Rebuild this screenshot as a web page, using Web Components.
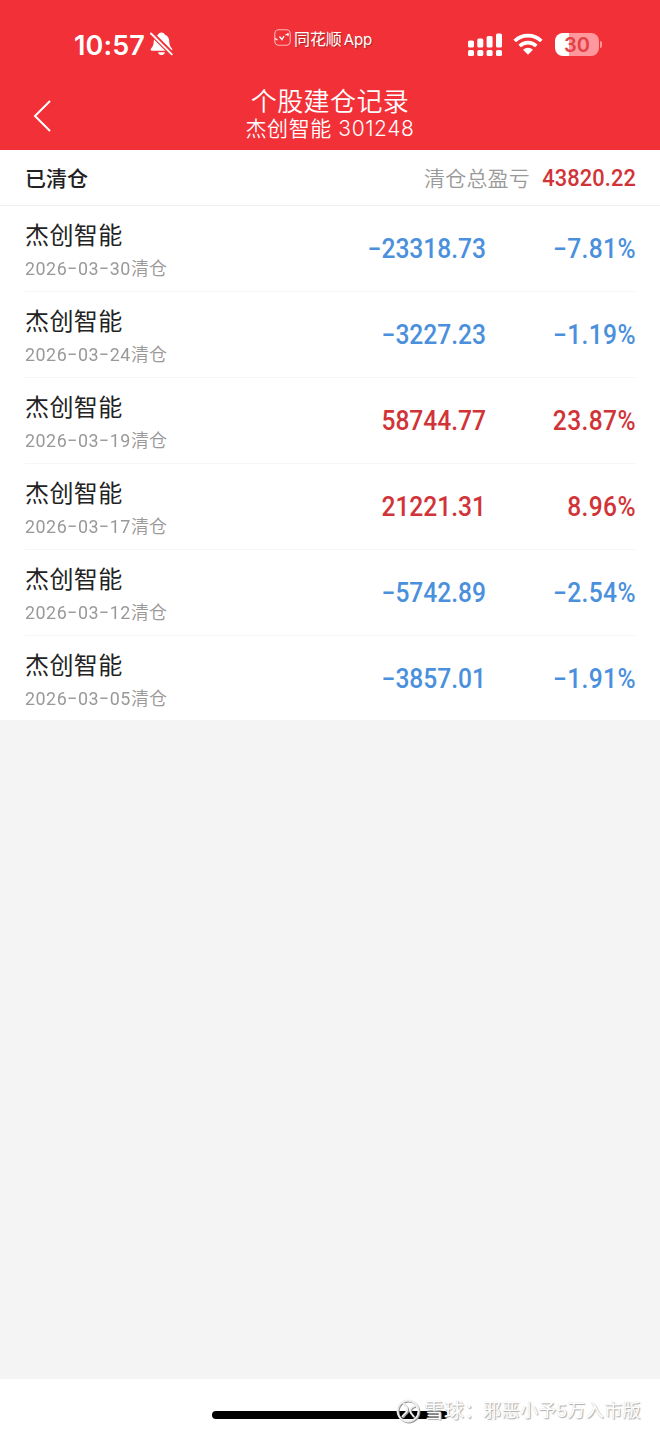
<!DOCTYPE html>
<html lang="zh-CN">
<head>
<meta charset="utf-8">
<title>个股建仓记录</title>
<style>
html,body{margin:0;height:100%}
body{background:#f4f4f4;font-family:Roboto,"Noto Sans CJK SC",sans-serif;color:#222}
</style>
</head>
<body>
<record-page></record-page>
<script>
function define(name, html, setup) {
  customElements.define(name, class extends HTMLElement {
    connectedCallback() {
      if (this.shadowRoot) return;
      const t = document.createElement('template');
      t.innerHTML = html;
      this.attachShadow({mode: 'open'}).append(t.content.cloneNode(true));
      if (setup) setup(this, this.shadowRoot);
    }
  });
}

define('status-bar', `
<style>
:host{display:grid;grid-template-columns:247px 1fr 222px;height:78px;color:#fff;font-family:Inter,"Noto Sans CJK SC",sans-serif}
.left,.right{display:flex;align-items:center;height:32px;margin-top:28px}
.left{padding-left:74px;gap:3px}
.time{font-size:27px;font-weight:600;line-height:32px;letter-spacing:.1px;width:73px;white-space:nowrap;padding-top:3px}
.app{display:flex;align-items:center;gap:3px;height:24px;margin-top:26px;padding-left:27px;font-size:16px;line-height:24px;white-space:nowrap;text-shadow:1px 1px 1px #a52b2b}
.app>span{padding-top:2px;letter-spacing:-.1px}
.app span span{margin-left:2px;letter-spacing:-.1px;font-size:15px}
.app svg{margin-top:-1px}
.right{padding-left:30px}
.wifi{margin-left:11px}
.battery{display:flex;align-items:center;margin-left:12px}
.cell{width:44px;height:23px;border-radius:8px;background:linear-gradient(90deg,#fff 14px,#ff989c 14px);color:#e24046;font-size:20px;font-weight:600;line-height:24px;text-align:center;letter-spacing:0}
.tip{width:2px;height:7px;margin-left:1px;border-radius:0 3px 3px 0;background:#ff989c}
svg{display:block;flex:none}
</style>
<div class="left"><span class="time">10:57</span>
<svg width="23" height="24" viewBox="0 0 23 24"><path fill="#fff" d="M11.5.5c-2 0-3 1-3.5 2.3-3 1-4 3.5-4.2 6.2-.2 4-1 5.500-2.300 7-1.500 1.500-.8 2.700.5 2.700h19c1.300 0 2-1.200.5-2.700-1.300-1.500-2.100-3-2.300-7C19 6.300 18 3.800 15 2.800 14.500 1.500 13.500.5 11.500.5ZM8 20.200h7c-.4 1.900-1.700 2.800-3.500 2.800S8.400 22.100 8 20.200Z"/><path stroke="#f23038" stroke-width="5" d="M1 1 22 22"/><path stroke="#fff" stroke-width="1.800" stroke-linecap="round" d="M1 1.500 21.800 22.400"/></svg></div>
<div class="app"><svg width="17" height="17" viewBox="0 0 17 17" fill="none" stroke="#fff"><rect x=".8" y=".8" width="15.400" height="15.400" rx="4" stroke-width="1.100" opacity=".65"/><path stroke-width="1.300" d="M1 9.500 3.500 11M5.500 7.500l2.500 3 2-3.500M11.500 6l3-1.500M14 4v3"/></svg><span>同花顺<span>App</span></span></div>
<div class="right">
<svg width="34" height="24" viewBox="0 0 34 24" fill="#fff"><rect y="8.500" width="6" height="7" rx="1.600"/><rect x="9.300" y="6.500" width="6" height="9" rx="1.600"/><rect x="18.600" y="4" width="6" height="11.500" rx="1.600"/><rect x="28" y="1.500" width="6" height="14" rx="1.600"/><rect y="18" width="6" height="6" rx="1.600"/><rect x="9.300" y="18" width="6" height="6" rx="1.600"/><rect x="18.600" y="18" width="6" height="6" rx="1.600"/><rect x="28" y="18" width="6" height="6" rx="1.600"/></svg>
<svg class="wifi" width="30" height="22" viewBox="0 0 30 22" fill="none" stroke="#fff" stroke-width="3.700"><path d="M1.700 8a19 19 0 0 1 26.600 0M6.700 13a12 12 0 0 1 16.600 0"/><path fill="#fff" stroke="none" d="M10 16.700a7.300 7.300 0 0 1 10 0L15.500 21.200q-.5.500-1 0Z"/></svg>
<div class="battery"><div class="cell">30</div><div class="tip"></div></div></div>
`);

define('nav-header', `
<style>
:host{display:grid;grid-template-columns:60px 1fr 60px;height:72px;color:#fff;font-family:Inter,"Noto Sans CJK SC",sans-serif}
svg{margin:21px 0 0 32px}
.titles{text-align:center;white-space:nowrap;padding-top:9px;font-weight:350}
.title{font-size:26px;line-height:30px;letter-spacing:.4px}
.sub{font-size:21px;line-height:25px;margin-top:-1px;letter-spacing:.6px}
</style>
<svg width="20" height="34" viewBox="0 0 20 34" fill="none" stroke="#fff" stroke-width="2"><path d="M18 2 3 17 18 32"/></svg>
<div class="titles"><div class="title"><slot name="title"></slot></div><div class="sub"><slot></slot></div></div>
`);

define('summary-bar', `
<style>
:host{display:flex;align-items:center;height:55px;padding:0 25px;background:#fff;border-bottom:1px solid #eee;white-space:nowrap}
.state{flex:1;font-size:21px;font-weight:500;margin-top:-2px}
.label{font-size:21px;font-weight:350;color:#999;letter-spacing:.2px;margin-top:-2px}
.sum{display:flex;justify-content:flex-end;width:92px;font-size:24px;font-weight:500;color:#d13438;margin-left:13px;letter-spacing:.1px;transform:translateX(1px) scaleX(.91);transform-origin:100% 50%;margin-top:1px}
</style>
<span class="state"><slot></slot></span><span class="label">清仓总盈亏</span><span class="sum">43820.22</span>
`);

define('record-row', `
<style>
:host{display:grid;grid-template-columns:1fr 160px 150px;align-items:center;height:85px;margin:0 25px;border-bottom:1px solid #f5f5f5;white-space:nowrap;color:#222}
:host(:last-of-type){border-bottom:0;height:83px;padding-top:1px}
.name{font-size:24px;line-height:32px;letter-spacing:.4px;padding-top:3px}
.date{display:flex;font-size:18px;line-height:25px;color:#999;margin-top:3px;font-weight:350;transform:translateY(1px)}
.day{width:106px;font-size:19px;font-weight:400;letter-spacing:.55px;transform:scaleX(.94);transform-origin:0 50%}
.value{font-size:27px;font-weight:500;text-align:right;color:#4a90dc;letter-spacing:0;transform:translateX(1px) scaleX(.91);transform-origin:100% 50%}
.rate{letter-spacing:.45px}
:host([up]) .value{color:#d13438}
</style>
<div><div class="name"></div><div class="date"><span class="day"></span><span>清仓</span></div></div><div class="value amount"></div><div class="value rate"></div>
`, (el, root) => {
  root.querySelector('.name').textContent = '杰创智能';
  root.querySelector('.day').textContent = el.getAttribute('date');
  root.querySelector('.amount').textContent = el.getAttribute('amount');
  root.querySelector('.rate').textContent = el.getAttribute('rate');
});

define('home-footer', `
<style>
:host{display:block;height:52px;background:#fff;position:relative}
.bar{width:236px;height:8px;border-radius:4px;background:#000;margin:0 auto;position:relative;top:32px}
.mark{position:absolute;left:396px;top:17px;display:flex;align-items:center;height:30px;white-space:nowrap;font-family:"Liberation Sans","Noto Sans CJK SC",sans-serif;font-size:18px;line-height:30px;color:#fff;text-shadow:1px 1px 1px #aaa,0 0 1px #ccc}
.brand{margin-left:4px;width:59px;font-size:20px}
.user{letter-spacing:.45px}
svg{filter:drop-shadow(1px 1px .5px #999)}
</style>
<div class="bar"></div>
<div class="mark"><svg width="24" height="24" viewBox="0 0 24 24" fill="none" stroke="#eee" stroke-width="1.800"><circle cx="12" cy="12" r="10.500"/><path d="M7 4c4 3 5 5 4 8-1 2-3 3-5 6M19 7c-3 1-5 3-5 5s2 3 4 6"/></svg><span class="brand">雪球：</span><span class="user">邪恶小予5万入市版</span></div>
`);

define('record-page', `
<style>
:host{display:flex;flex-direction:column;height:1431px;background:#f4f4f4}
header{background:#f23038;height:150px}
main{flex:1}
.list{background:#fff}
</style>
<header><status-bar></status-bar><nav-header><span slot="title">个股建仓记录</span>杰创智能 301248</nav-header></header>
<main><summary-bar>已清仓</summary-bar>
<div class="list">
<record-row date="2026−03−30" amount="−23318.73" rate="−7.81%"></record-row>
<record-row date="2026−03−24" amount="−3227.23" rate="−1.19%"></record-row>
<record-row up date="2026−03−19" amount="58744.77" rate="23.87%"></record-row>
<record-row up date="2026−03−17" amount="21221.31" rate="8.96%"></record-row>
<record-row date="2026−03−12" amount="−5742.89" rate="−2.54%"></record-row>
<record-row date="2026−03−05" amount="−3857.01" rate="−1.91%"></record-row>
</div></main>
<home-footer></home-footer>
`);
</script>
</body>
</html>
